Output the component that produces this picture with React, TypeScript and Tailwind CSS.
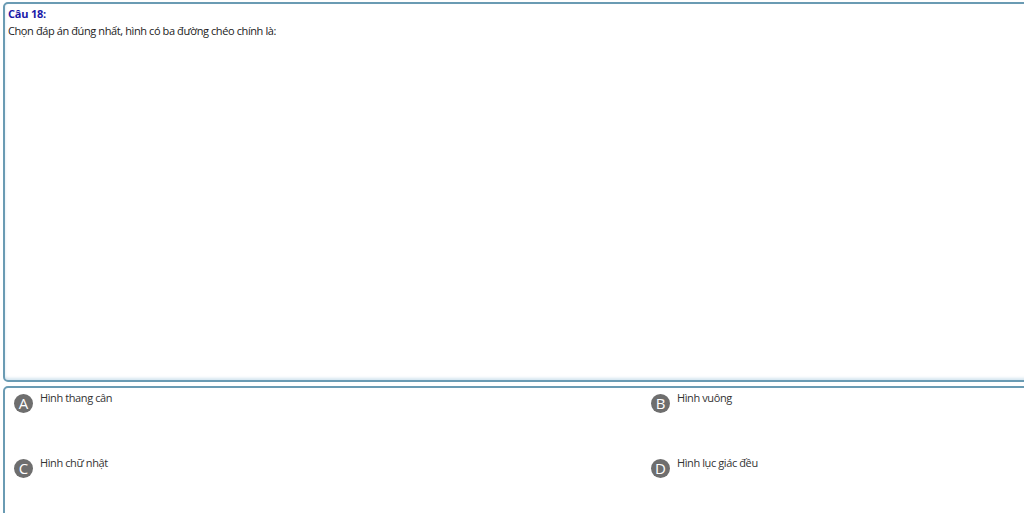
import React from "react";

const font = { fontFamily: '"Open Sans", "Noto Sans", sans-serif' };

function Option({ letter, text }: { letter: string; text: string }) {
  return (
    <div className="flex items-start h-[65px]">
      <div className="mt-[3px] w-[19px] h-[19px] rounded-full bg-[#6e6e6e] text-white flex items-center justify-center text-[15px] leading-none shrink-0">
        {letter}
      </div>
      <div className="ml-[7px] text-[11px] leading-[14px] tracking-[-0.4px] text-[#333333]">{text}</div>
    </div>
  );
}

export default function App() {
  return (
    <div className="w-[1024px] h-[513px] overflow-hidden bg-white" style={font}>
      <div className="pt-[2px] pl-[3px]">
        <div className="w-[1300px] h-[380px] border-2 border-[#6a9bb3] rounded-[5px] shadow-[inset_0_-2px_3px_#d6e6f0] px-[3px] pt-[3px]">
          <div className="text-[11px] leading-[14px] font-bold tracking-[-0.2px] text-[#1a1aa8]">Câu 18:</div>
          <div className="mt-[2px] text-[11px] leading-[16px] tracking-[-0.4px] text-[#222222]">
            Chọn đáp án đúng nhất, hình có ba đường chéo chính là:
          </div>
        </div>
        <div className="mt-[4px] w-[1300px] h-[200px] border-2 border-[#6a9bb3] rounded-[5px] pl-[9px] pt-[3px]">
          <div className="grid grid-cols-[637px_637px]">
            <Option letter="A" text="Hình thang cân" />
            <Option letter="B" text="Hình vuông" />
            <Option letter="C" text="Hình chữ nhật" />
            <Option letter="D" text="Hình lục giác đều" />
          </div>
        </div>
      </div>
    </div>
  );
}
